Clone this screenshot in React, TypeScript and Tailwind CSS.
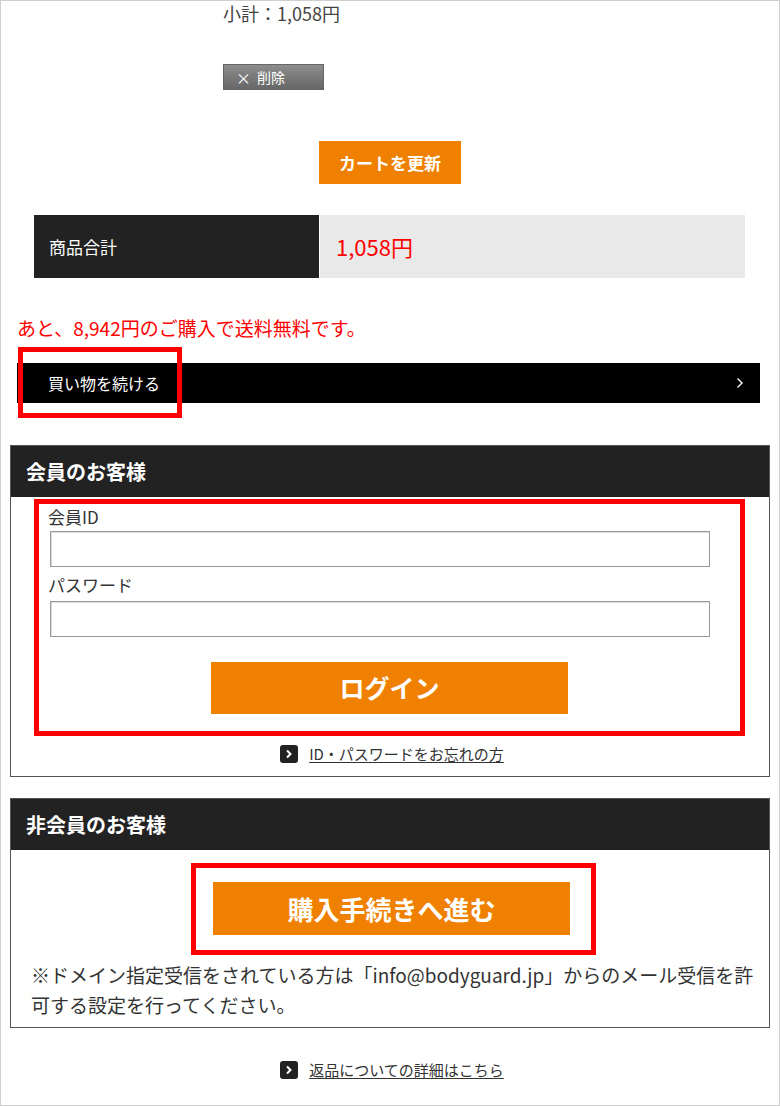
import React from "react";

const ORANGE = "bg-[#f08000]";

function LinkRow({ label, className }: { label: string; className?: string }) {
  return (
    <div className={"flex h-[20px] items-center justify-center gap-[11px] pl-[4px] " + (className ?? "")}>
      <span className="flex h-[18px] w-[18px] items-center justify-center rounded-[3px] bg-[#222]">
        <svg width="8" height="10" viewBox="0 0 8 10" fill="none">
          <polyline points="2,1.5 5.5,5 2,8.5" stroke="#fff" strokeWidth="2" />
        </svg>
      </span>
      <a className="text-[15px] leading-[20px] text-[#333] underline underline-offset-2">{label}</a>
    </div>
  );
}

function BoxHeader({ title }: { title: string }) {
  return (
    <div className="flex h-[51px] items-center bg-[#222] pl-[15px] text-[20px] font-bold text-white">
      {title}
    </div>
  );
}

export default function App() {
  return (
    <div className="relative h-[1106px] w-[780px] overflow-hidden border border-[#cfcfcf] bg-white font-['Noto_Sans_CJK_JP','Noto_Sans',sans-serif] text-[#333]">
      {/* subtotal + delete */}
      <p className="pl-[222px] text-[18px] leading-[24px] text-[#444]">小計：1,058円</p>
      <button className="ml-[222px] mt-[39px] flex h-[26px] w-[101px] items-center gap-[6px] border border-[#666] bg-gradient-to-b from-[#8d8d8d] to-[#676767] pl-[12px] text-[14px] text-white">
        <span className="text-[15px] leading-none">×</span>
        <span>削除</span>
      </button>

      <button className={"mx-auto mt-[51px] flex h-[43px] w-[142px] items-center justify-center text-[17px] font-bold text-white " + ORANGE}>
        カートを更新
      </button>

      {/* total */}
      <div className="ml-[33px] mt-[31px] flex h-[63px] w-[711px]">
        <div className="flex w-[285px] items-center bg-[#222] pl-[15px] text-[17px] text-white">商品合計</div>
        <div className="ml-[1px] flex flex-1 items-center bg-[#e9e9e9] pl-[16px] text-[22px] text-[#f00]">1,058円</div>
      </div>

      <p className="mt-[37px] pl-[16px] text-[19px] leading-[26px] text-[#f00]">あと、8,942円のご購入で送料無料です。</p>

      {/* continue shopping */}
      <div className="relative ml-[16px] mt-[22px] flex h-[40px] w-[743px] items-center justify-between bg-black pl-[31px] pr-[16px] text-[16px] text-white">
        <span>買い物を続ける</span>
        <svg width="8" height="12" viewBox="0 0 8 12" fill="none">
          <polyline points="1.5,1.5 6,6 1.5,10.5" stroke="#fff" strokeWidth="1.4" />
        </svg>
        <div className="pointer-events-none absolute left-[1px] top-[-16px] h-[71px] w-[164px] border-[5px] border-[#f00]" />
      </div>

      {/* member */}
      <div className="ml-[9px] mt-[42px] w-[760px] border border-[#555]">
        <BoxHeader title="会員のお客様" />
        <div className="pt-[2px] pb-[12px]">
          <div className="ml-[23px] w-[711px] border-[5px] border-[#f00] pt-[1px] pb-[17px]">
            <label className="block pl-[9px] text-[17px] leading-[24px]">会員ID</label>
            <input className="ml-[11px] mt-[2px] block h-[36px] w-[660px] border border-[#9a9a9a] bg-white shadow-[inset_1px_1px_1px_rgba(0,0,0,0.15)]" />
            <label className="mt-[6px] block pl-[9px] text-[17px] leading-[24px]">パスワード</label>
            <input type="password" className="ml-[11px] mt-[4px] block h-[36px] w-[660px] border border-[#9a9a9a] bg-white shadow-[inset_1px_1px_1px_rgba(0,0,0,0.15)]" />
            <button className={"mx-auto mt-[25px] flex h-[52px] w-[357px] items-center justify-center text-[25px] font-bold text-white " + ORANGE}>
              ログイン
            </button>
          </div>
          <LinkRow label="ID・パスワードをお忘れの方" className="mt-[8px]" />
        </div>
      </div>

      {/* guest */}
      <div className="ml-[9px] mt-[21px] w-[760px] border border-[#555]">
        <BoxHeader title="非会員のお客様" />
        <div className="pt-[13px] pb-[7px]">
          <div className="ml-[180px] w-[405px] border-[5px] border-[#f00] pl-[17px] pt-[14px] pb-[15px]">
            <button className={"flex h-[53px] w-[357px] items-center justify-center text-[26px] font-bold text-white " + ORANGE}>
              購入手続きへ進む
            </button>
          </div>
          <p className="mt-[5px] whitespace-nowrap pl-[20px] text-[19px] leading-[30px] text-[#333]">
            ※ドメイン指定受信をされている方は「info@bodyguard.jp」からのメール受信を許
            <br />
            可する設定を行ってください。
          </p>
        </div>
      </div>

      <LinkRow label="返品についての詳細はこちら" className="mt-[32px]" />
    </div>
  );
}
